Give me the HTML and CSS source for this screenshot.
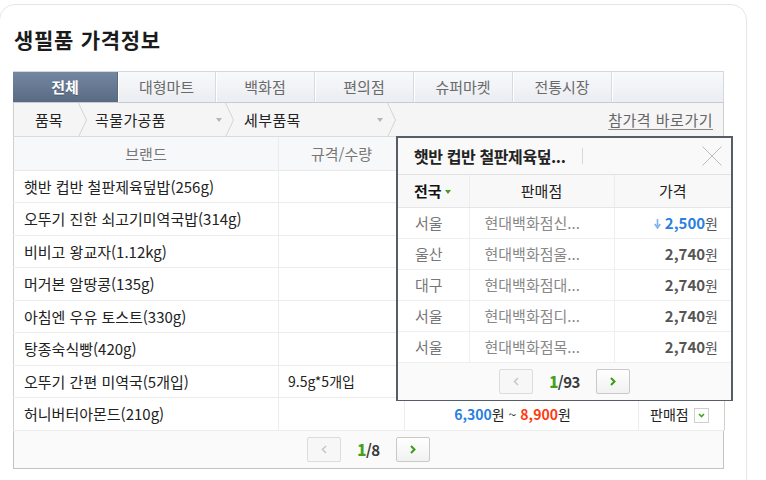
FILE: index.html
```html
<!DOCTYPE html>
<html lang="ko">
<head>
<meta charset="utf-8">
<title>생필품 가격정보</title>
<link rel="stylesheet" href="styles.css">
</head>
<body>
<div class="card">
  <h2 class="title">생필품 가격정보</h2>
  <div class="board">
    <ul class="tabs">
      <li class="tab active t1">전체</li>
      <li class="tab t2">대형마트</li>
      <li class="tab t3">백화점</li>
      <li class="tab t3">편의점</li>
      <li class="tab t3">슈퍼마켓</li>
      <li class="tab t3">전통시장</li>
      <li class="tab empty"></li>
    </ul>
    <div class="crumbs">
      <span class="crumb c1">품목</span>
      <svg class="chev" width="9" height="34" viewBox="0 0 9 34"><polyline points="0.5,0 8.5,17 0.5,34" fill="none" stroke="#d4d4d4" stroke-width="1"/></svg>
      <span class="crumb c2"><span>곡물가공품</span><i class="tri"></i></span>
      <svg class="chev" width="9" height="34" viewBox="0 0 9 34"><polyline points="0.5,0 8.5,17 0.5,34" fill="none" stroke="#d4d4d4" stroke-width="1"/></svg>
      <span class="crumb c3"><span>세부품목</span><i class="tri"></i></span>
      <svg class="chev" width="9" height="34" viewBox="0 0 9 34"><polyline points="0.5,0 8.5,17 0.5,34" fill="none" stroke="#d4d4d4" stroke-width="1"/></svg>
      <a class="shortcut" href="#">참가격 바로가기</a>
    </div>
    <table class="grid">
      <colgroup><col class="w-brand"><col class="w-spec"><col class="w-price"><col class="w-shop"></colgroup>
      <thead>
        <tr><th>브랜드</th><th>규격/수량</th><th></th><th></th></tr>
      </thead>
      <tbody>
        <tr><td class="brand">햇반 컵반 철판제육덮밥(256g)</td><td class="spec"></td><td class="price"></td><td class="shop"></td></tr>
        <tr><td class="brand">오뚜기 진한 쇠고기미역국밥(314g)</td><td class="spec"></td><td class="price"></td><td class="shop"></td></tr>
        <tr><td class="brand">비비고 왕교자(1.12kg)</td><td class="spec"></td><td class="price"></td><td class="shop"></td></tr>
        <tr><td class="brand">머거본 알땅콩(135g)</td><td class="spec"></td><td class="price"></td><td class="shop"></td></tr>
        <tr><td class="brand">아침엔 우유 토스트(330g)</td><td class="spec"></td><td class="price"></td><td class="shop"></td></tr>
        <tr><td class="brand">탕종숙식빵(420g)</td><td class="spec"></td><td class="price"></td><td class="shop"></td></tr>
        <tr><td class="brand">오뚜기 간편 미역국(5개입)</td><td class="spec">9.5g*5개입</td><td class="price"></td><td class="shop"></td></tr>
        <tr><td class="brand">허니버터아몬드(210g)</td><td class="spec"></td><td class="price"><b class="lo">6,300</b>원 ~ <b class="hi">8,900</b>원</td><td class="shop">판매점 <i class="dd"></i></td></tr>
      </tbody>
    </table>
    <div class="pager main-pager">
      <span class="pbtn prev"><svg width="6" height="9" viewBox="0 0 6 9"><polyline points="5,1 1.5,4.5 5,8" fill="none" stroke="#c8c8c8" stroke-width="1.6"/></svg></span>
      <span class="pnum"><b class="cur">1</b>/8</span>
      <span class="pbtn next"><svg width="6" height="9" viewBox="0 0 6 9"><polyline points="1,1 4.5,4.5 1,8" fill="none" stroke="#3b9c17" stroke-width="2"/></svg></span>
    </div>

    <div class="popup">
      <div class="pop-head">
        <span class="pop-title">햇반 컵반 철판제육덮...</span>
        <span class="pop-sep"></span>
        <svg class="pop-close" width="20" height="20" viewBox="0 0 20 20"><path d="M0.5 0.5 L19.5 19.5 M19.5 0.5 L0.5 19.5" stroke="#bdbdbd" stroke-width="1" fill="none"/></svg>
      </div>
      <table class="pop-grid">
        <colgroup><col class="pw1"><col class="pw2"><col class="pw3"></colgroup>
        <thead>
          <tr><th class="region-h">전국<i class="gtri"></i></th><th>판매점</th><th>가격</th></tr>
        </thead>
        <tbody>
          <tr><td class="region">서울</td><td class="store">현대백화점신...</td><td class="amt best"><svg class="down" width="7" height="10" viewBox="0 0 7 10"><path d="M3.5 0 V7 M0.8 5 L3.5 9 L6.2 5" stroke="#7fb3ea" stroke-width="1.6" fill="none"/></svg><b>2,500</b>원</td></tr>
          <tr><td class="region">울산</td><td class="store">현대백화점울...</td><td class="amt"><b>2,740</b>원</td></tr>
          <tr><td class="region">대구</td><td class="store">현대백화점대...</td><td class="amt"><b>2,740</b>원</td></tr>
          <tr><td class="region">서울</td><td class="store">현대백화점디...</td><td class="amt"><b>2,740</b>원</td></tr>
          <tr><td class="region">서울</td><td class="store">현대백화점목...</td><td class="amt"><b>2,740</b>원</td></tr>
        </tbody>
      </table>
      <div class="pager pop-pager">
        <span class="pbtn prev"><svg width="6" height="9" viewBox="0 0 6 9"><polyline points="5,1 1.5,4.5 5,8" fill="none" stroke="#c8c8c8" stroke-width="1.6"/></svg></span>
        <span class="pnum"><b class="cur">1</b>/93</span>
        <span class="pbtn next"><svg width="6" height="9" viewBox="0 0 6 9"><polyline points="1,1 4.5,4.5 1,8" fill="none" stroke="#3b9c17" stroke-width="2"/></svg></span>
      </div>
    </div>
  </div>
</div>
</body>
</html>
```
FILE: styles.css
```css
* { box-sizing: border-box; }
html, body { margin: 0; padding: 0; background: #fff; }
body {
  font-family: "Noto Sans CJK KR", "Noto Sans", sans-serif;
  color: #222;
  padding-top: 4px;
  overflow: hidden;
}
.card {
  margin-left: -1px;
  width: 748px;
  height: 530px;
  border: 1px solid #e6e6e6;
  border-radius: 16px;
  padding: 20px 0 0 13px;
}
.title {
  margin: 0 0 18px 1px;
  font-size: 21px;
  line-height: 28px;
  font-weight: 700;
  color: #1b1b1b;
  letter-spacing: 0.7px;
}
.board {
  position: relative;
  width: 711px;
}

/* tabs */
.tabs {
  list-style: none;
  margin: 0;
  padding: 0;
  display: flex;
  height: 32px;
  border-top: 1px solid #d3d8de;
  border-bottom: 1px solid #c7ccd3;
  border-right: 1px solid #d3d8de;
}
.tab {
  height: 30px;
  line-height: 30px;
  text-align: center;
  font-size: 15px;
  color: #6a6a6a;
  background: linear-gradient(#f8f9fb, #eaedf1);
  border-right: 1px solid #d6dbe1;
  box-shadow: inset 1px 0 0 #fff;
}
.t1 { width: 105px; }
.t2 { width: 98px; }
.t3 { width: 99px; }
.tab.empty { flex: 1; border-right: 0; }
.tab.active {
  background: linear-gradient(#7387a1, #5a6a83);
  color: #fff;
  font-weight: 700;
  border-right: 1px solid #5a6a83;
  box-shadow: none;
  text-shadow: 0 1px 0 rgba(0,0,0,0.25);
}

/* breadcrumb */
.crumbs {
  display: flex;
  align-items: center;
  height: 34px;
  background: #f5f5f5;
  border-left: 1px solid #cfcfcf;
  border-right: 1px solid #cfcfcf;
  border-bottom: 1px solid #dcdcdc;
  font-size: 15px;
  color: #222;
}
.chev { display: block; flex: none; }
.crumb { display: flex; align-items: center; height: 33px; }
.c1 { width: 64px; padding-left: 21px; }
.c2 { width: 138px; padding-left: 8px; padding-right: 3px; justify-content: space-between; letter-spacing: 0.4px; }
.c3 { width: 153px; padding-left: 10px; padding-right: 4px; justify-content: space-between; letter-spacing: 0.4px; }
.tri {
  width: 0; height: 0;
  border-left: 3.5px solid transparent;
  border-right: 3.5px solid transparent;
  border-top: 4px solid #b5b5b5;
}
.shortcut {
  margin-left: auto;
  margin-right: 10px;
  color: #666;
  letter-spacing: 0.5px;
  text-decoration: underline;
  text-underline-offset: 3px;
  text-decoration-color: #888;
}

/* main grid */
.grid {
  width: 711px;
  border-collapse: collapse;
  table-layout: fixed;
  font-size: 15px;
  border-left: 1px solid #cfcfcf;
  border-right: 1px solid #cfcfcf;
}
.w-brand { width: 265px; }
.w-spec { width: 126px; }
.w-price { width: 234px; }
.w-shop { width: 86px; }
.grid th {
  height: 33px;
  background: #f7f8fa;
  font-weight: 400;
  color: #777;
  border-bottom: 1px solid #e9e9e9;
  border-right: 1px solid #ebebeb;
  padding: 0;
}
.grid td {
  height: 32.5px;
  padding: 0;
  border-bottom: 1px solid #ececec;
  border-right: 1px solid #ececec;
  white-space: nowrap;
  color: #222;
}
.grid th:last-child, .grid td:last-child { border-right: 0; }
.grid td.brand { padding-left: 10px; }
.grid td.spec { padding-left: 9px; font-size: 14px; }
.grid td.price { text-align: center; padding-right: 18px; font-size: 14px; }
.grid td.shop { padding-left: 11px; font-size: 14px; }
.lo { color: #2a7fe2; font-weight: 700; }
.hi { color: #ff3a11; font-weight: 700; }
.dd {
  display: inline-block;
  vertical-align: middle;
  width: 15px; height: 15px;
  margin-left: 1px;
  border: 1px solid #cfcfcf;
  background: #fff url("data:image/svg+xml;utf8,<svg xmlns='http://www.w3.org/2000/svg' width='13' height='13'><polyline points='4,5 6.5,7.5 9,5' fill='none' stroke='%2344a31f' stroke-width='1.6'/></svg>") center/13px 13px no-repeat;
}

/* pager */
.pager {
  display: flex;
  justify-content: center;
  align-items: center;
  gap: 16px;
  height: 38px;
  background: #fafafa;
}
.main-pager {
  border: 1px solid #c3c3c3;
  border-top: 0;
}
.pbtn {
  width: 34px;
  height: 25px;
  display: flex;
  align-items: center;
  justify-content: center;
  border: 1px solid #c9c9c9;
  border-radius: 2px;
  background: linear-gradient(#fff, #f1f1f1);
}
.pbtn.prev { border-color: #dcdcdc; background: #f7f7f7; }
.pnum {
  font-size: 15px;
  font-weight: 700;
  color: #3a3a3a;
  letter-spacing: -0.5px;
}
.pnum .cur { color: #46a020; }

/* popup */
.popup {
  position: absolute;
  left: 383px;
  top: 65px;
  width: 337px;
  height: 265px;
  border: 2px solid #565c68;
  background: #fff;
  z-index: 5;
}
.pop-head {
  display: flex;
  align-items: center;
  height: 37px;
  background: #f9f9f9;
  border-bottom: 1px solid #e2e2e2;
  padding-left: 16px;
  padding-right: 9px;
}
.pop-title {
  font-size: 16px;
  font-weight: 700;
  color: #222;
  letter-spacing: -0.4px;
}
.pop-sep {
  width: 1px;
  height: 16px;
  background: #dadada;
  margin-left: 16px;
}
.pop-close { margin-left: auto; display: block; }
.pop-grid {
  width: 333px;
  border-collapse: collapse;
  table-layout: fixed;
  font-size: 15px;
}
.pw1 { width: 71px; }
.pw2 { width: 145px; }
.pw3 { width: 117px; }
.pop-grid th {
  height: 32px;
  padding: 0;
  background: #f8f8f8;
  font-weight: 400;
  color: #222;
  border-bottom: 1px solid #e6e6e6;
  border-right: 1px solid #ececec;
}
.pop-grid th.region-h { text-align: left; padding-left: 16px; font-weight: 700; color: #111; }
.gtri {
  display: inline-block;
  vertical-align: middle;
  margin-left: 3px;
  margin-top: -2px;
  border-left: 3.5px solid transparent;
  border-right: 3.5px solid transparent;
  border-top: 4px solid #3f9f21;
}
.pop-grid td {
  height: 31px;
  padding: 0;
  border-bottom: 1px solid #efefef;
  border-right: 1px solid #efefef;
  white-space: nowrap;
}
.pop-grid th:last-child, .pop-grid td:last-child { border-right: 0; }
.pop-grid td.region { padding-left: 17px; color: #777; }
.pop-grid td.store { padding-left: 15px; color: #888; }
.pop-grid td.amt { text-align: right; padding-right: 13px; color: #555; font-size: 14px; }
.pop-grid td.amt b { color: #555; font-weight: 700; font-size: 15px; }
.pop-grid td.best b { color: #2a7fe2; }
.down { display: inline-block; vertical-align: middle; margin-right: 4px; margin-top: -2px; }
.pop-pager {
  height: 37px;
  background: #fafafa;
}
```
